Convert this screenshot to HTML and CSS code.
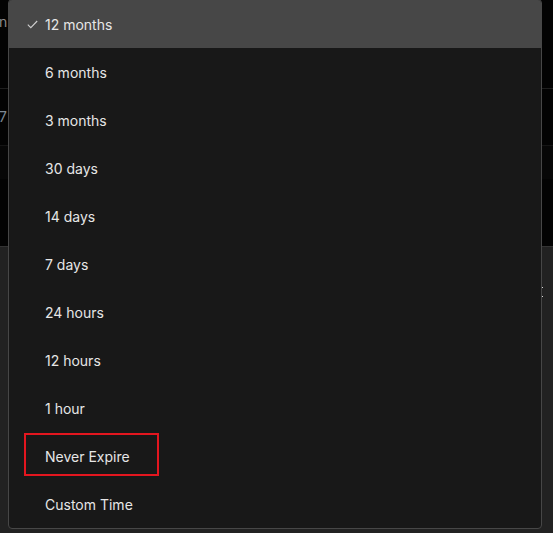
FILE: index.html
```html
<!DOCTYPE html>
<html>
<head>
<meta charset="utf-8">
<link rel="stylesheet" href="styles.css">
</head>
<body>
<div class="backdrop">
  <div class="bg-top">
    <div class="bg-row r1"><span class="peek">n</span></div>
    <div class="bg-row r2"><span class="peek num">7</span></div>
    <div class="bg-row r3"></div>
    <div class="bg-row r4"></div>
  </div>
  <div class="bg-bottom"><span class="dot d1"></span><span class="dot d2"></span></div>
</div>
<ul class="menu">
  <li class="item selected"><svg class="check" width="11" height="9" viewBox="0 0 11 9"><path d="M0.8 4.6 L3.8 7.6 L10.2 1" fill="none" stroke="#d0d0d0" stroke-width="1.1"/></svg>12 months</li>
  <li class="item">6 months</li>
  <li class="item">3 months</li>
  <li class="item">30 days</li>
  <li class="item">14 days</li>
  <li class="item">7 days</li>
  <li class="item">24 hours</li>
  <li class="item">12 hours</li>
  <li class="item">1 hour</li>
  <li class="item"><span class="highlight">Never Expire</span></li>
  <li class="item">Custom Time</li>
</ul>
</body>
</html>
```
FILE: styles.css
```css
html, body {
  margin: 0;
  padding: 0;
  width: 553px;
  height: 533px;
  overflow: hidden;
  background: #222222;
  font-family: Inter, "Noto Sans", sans-serif;
}
.backdrop {
  position: absolute;
  inset: 0;
  display: flex;
  flex-direction: column;
}
.bg-top {
  height: 246px;
  background: #030303;
  display: flex;
  flex-direction: column;
}
.bg-row { position: relative; }
.r1 { height: 88px; border-bottom: 1px solid #1f1f1f; }
.r2 { height: 56px; border-bottom: 1px solid #151515; }
.r3 { height: 33px; background: #070707; }
.r4 { flex: 1; }
.peek {
  position: absolute;
  left: -1px;
  color: #8a8a8a;
  font-size: 14px;
}
.r1 .peek { top: 13px; }
.r2 .peek { top: 19px; color: #7d8894; }
.bg-bottom {
  flex: 1;
  background: #222222;
  border-top: 1px solid #333333;
  position: relative;
}
.dot {
  position: absolute;
  left: 542px;
  width: 1px;
  height: 1px;
  background: #d8d8d8;
}
.d1 { top: 40px; }
.d2 { top: 49px; }
.menu {
  position: absolute;
  left: 8px;
  top: -1px;
  width: 532px;
  margin: 0;
  padding: 0;
  list-style: none;
  background: #181818;
  border: 1px solid #474747;
  border-radius: 4px;
  overflow: hidden;
}
.item {
  height: 48px;
  display: flex;
  align-items: center;
  padding-top: 1px;
  box-sizing: border-box;
  padding-left: 36px;
  color: #e6e6e6;
  font-size: 14px;
  font-weight: 400;
  position: relative;
}
.item.selected {
  background: #474747;
}
.check {
  position: absolute;
  left: 18px;
  top: 20px;
}
.highlight {
  position: relative;
}
.highlight::before {
  content: "";
  position: absolute;
  left: -21px;
  top: -15px;
  width: 131px;
  height: 39px;
  border: 2px solid #e3161f;
}
```
